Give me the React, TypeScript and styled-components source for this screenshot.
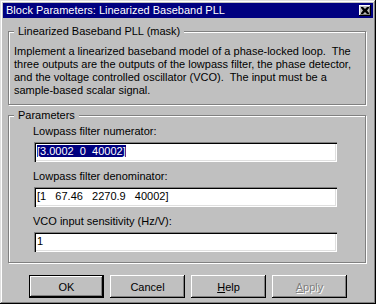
import * as React from 'react';
import styled, { createGlobalStyle } from 'styled-components';

const GlobalStyle = createGlobalStyle`
  html, body {
    margin: 0;
    padding: 0;
    background: #c0c0c0;
  }
  body {
    font-family: 'Liberation Sans', Arial, sans-serif;
    font-size: 11px;
    color: #000;
  }
`;

const Window = styled.div`
  box-sizing: border-box;
  width: 376px;
  height: 304px;
  padding: 3px;
  background: #c0c0c0;
  box-shadow: inset -1px -1px 0 #000, inset 1px 1px 0 #dfdfdf, inset -2px -2px 0 #808080, inset 2px 2px 0 #fff;
  display: flex;
  flex-direction: column;
`;

const TitleBar = styled.div`
  height: 15px;
  background: #000080;
  display: flex;
  align-items: center;
  justify-content: space-between;
  padding: 0 2px 0 3px;
`;

const Title = styled.span`
  color: #fff;
  font-size: 11px;
  line-height: 15px;
  white-space: nowrap;
`;

const CloseButton = styled.button`
  box-sizing: border-box;
  width: 12px;
  height: 11px;
  padding: 0;
  border: none;
  background: #c0c0c0;
  box-shadow: inset -1px -1px 0 #000, inset 1px 1px 0 #fff, inset -2px -2px 0 #808080;
  display: flex;
  align-items: center;
  justify-content: center;
`;

const Body = styled.div`
  padding: 13px 7px 0 5px;
  display: flex;
  flex-direction: column;
`;

const Group = styled.div<{ $height: number }>`
  position: relative;
  box-sizing: border-box;
  height: ${p => p.$height}px;
  border: 1px solid #808080;
  box-shadow: inset 1px 1px 0 #fff, 1px 1px 0 #fff;
  & + & {
    margin-top: 10px;
  }
`;

const GroupLabel = styled.span`
  position: absolute;
  top: -7px;
  left: 5px;
  padding: 0 4px 0 4px;
  background: #c0c0c0;
  line-height: 13px;
  white-space: nowrap;
`;

const Description = styled.p`
  margin: 0;
  padding: 13px 0 0 5px;
  line-height: 13px;
  white-space: pre;
`;

const Params = styled.div`
  display: flex;
  flex-direction: column;
  padding: 9px 0 0 24px;
`;

const FieldLabel = styled.label`
  display: block;
  line-height: 13px;
  margin-top: 8px;
  &:first-child {
    margin-top: 0;
  }
`;

const Field = styled.div`
  box-sizing: border-box;
  width: 303px;
  height: 20px;
  margin: 4px 0 0 1px;
  padding: 3px 3px 0;
  background: #fff;
  box-shadow: inset 1px 1px 0 #808080, inset 2px 2px 0 #000, inset -1px -1px 0 #fff, inset -2px -2px 0 #dfdfdf;
  line-height: 13px;
  white-space: pre;
`;

const Selected = styled.span`
  background: #000080;
  color: #fff;
`;

const ButtonRow = styled.div`
  display: flex;
  gap: 6px;
  padding: 12px 0 0 26px;
`;

const Button = styled.button<{ $default?: boolean }>`
  box-sizing: border-box;
  width: 75px;
  height: 23px;
  padding: 0;
  border: none;
  background: #c0c0c0;
  font-family: 'Liberation Sans', Arial, sans-serif;
  font-size: 11px;
  color: #000;
  box-shadow: ${p =>
    p.$default
      ? 'inset 0 0 0 1px #000, inset -2px -2px 0 #000, inset 2px 2px 0 #fff, inset -3px -3px 0 #808080'
      : 'inset -1px -1px 0 #000, inset 1px 1px 0 #fff, inset -2px -2px 0 #808080'};

  &:disabled {
    color: #808080;
    text-shadow: 1px 1px 0 #fff;
  }

  u {
    text-decoration: underline;
  }
`;

function CloseGlyph() {
  return (
    <svg width="8" height="7" viewBox="0 0 8 7">
      <path d="M0 0h2l2 2 2-2h2v1L6 3.5 8 6v1H6L4 5 2 7H0V6l2-2.5L0 1z" fill="#000" />
    </svg>
  );
}

export default function App() {
  return (
    <>
      <GlobalStyle />
      <Window>
        <TitleBar>
          <Title>Block Parameters: Linearized Baseband PLL</Title>
          <CloseButton aria-label="Close">
            <CloseGlyph />
          </CloseButton>
        </TitleBar>
        <Body>
          <Group $height={74}>
            <GroupLabel>Linearized Baseband PLL (mask)</GroupLabel>
            <Description>
              {'Implement a linearized baseband model of a phase-locked loop.  The'}
              <br />
              {'three outputs are the outputs of the lowpass filter, the phase detector,'}
              <br />
              {'and the voltage controlled oscillator (VCO).  The input must be a'}
              <br />
              {'sample-based scalar signal.'}
            </Description>
          </Group>
          <Group $height={148}>
            <GroupLabel>Parameters</GroupLabel>
            <Params>
              <FieldLabel>Lowpass filter numerator:</FieldLabel>
              <Field>
                <Selected>[3.0002  0  40002]</Selected>
              </Field>
              <FieldLabel>Lowpass filter denominator:</FieldLabel>
              <Field>[1   67.46   2270.9   40002]</Field>
              <FieldLabel>VCO input sensitivity (Hz/V):</FieldLabel>
              <Field>1</Field>
            </Params>
          </Group>
        </Body>
        <ButtonRow>
          <Button $default>OK</Button>
          <Button>Cancel</Button>
          <Button>
            <u>H</u>elp
          </Button>
          <Button disabled>
            <u>A</u>pply
          </Button>
        </ButtonRow>
      </Window>
    </>
  );
}
